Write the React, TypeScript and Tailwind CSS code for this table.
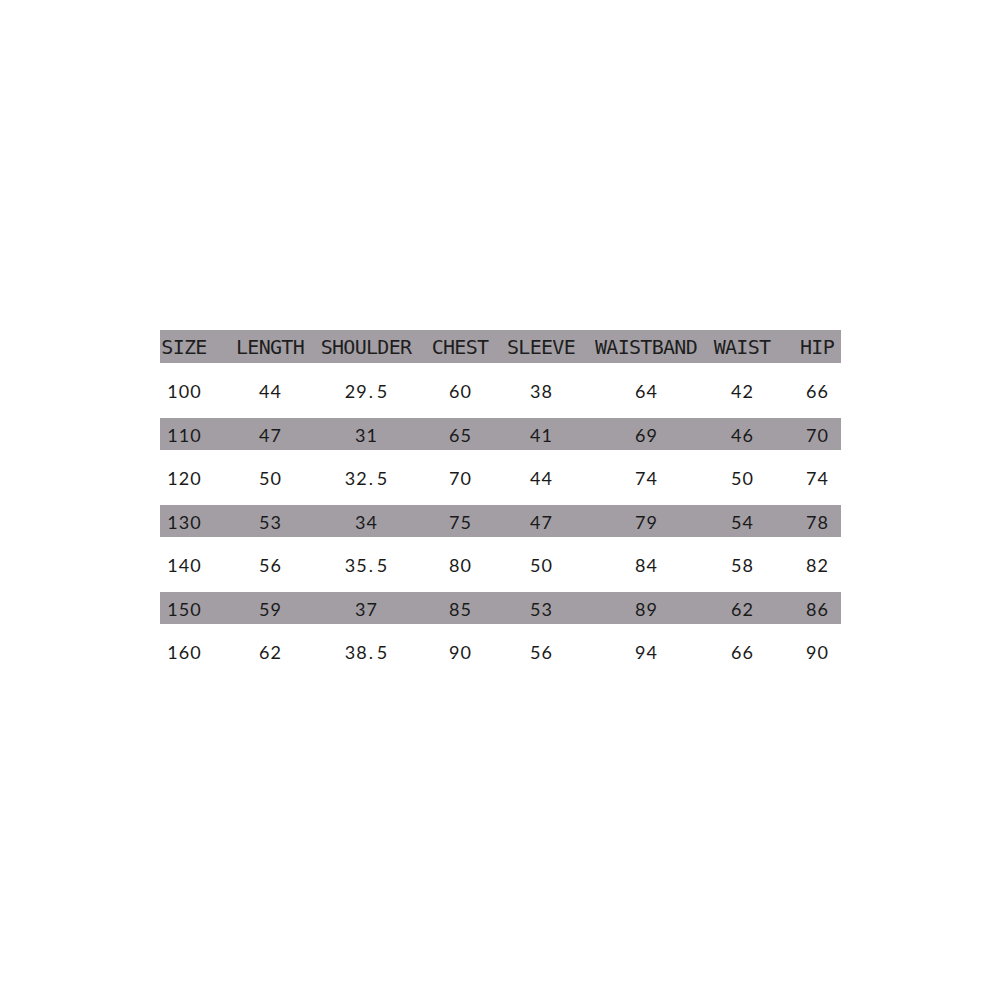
import React from "react";

const header = ["SIZE", "LENGTH", "SHOULDER", "CHEST", "SLEEVE", "WAISTBAND", "WAIST", "HIP"];

const rows: string[][] = [
  ["100", "44", "29.5", "60", "38", "64", "42", "66"],
  ["110", "47", "31", "65", "41", "69", "46", "70"],
  ["120", "50", "32.5", "70", "44", "74", "50", "74"],
  ["130", "53", "34", "75", "47", "79", "54", "78"],
  ["140", "56", "35.5", "80", "50", "84", "58", "82"],
  ["150", "59", "37", "85", "53", "89", "62", "86"],
  ["160", "62", "38.5", "90", "56", "94", "66", "90"],
];

// margin-left per column so that cell (40px wide) centers land on the reference centres
const colMargins = ["ml-[4px]", "ml-[46px]", "ml-[56px]", "ml-[54px]", "ml-[41px]", "ml-[65px]", "ml-[56px]", "ml-[35px]"];

function Value({ v }: { v: string }) {
  const parts = v.split(".");
  if (parts.length === 1) return <span className="tracking-[1px] mr-[-1px]">{v}</span>;
  return (
    <span className="tracking-[1px] mr-[-1px]">
      {parts[0]}
      <span className="inline-block w-[9px] pl-[1px]">.</span>
      {parts[1]}
    </span>
  );
}

function Row({ cells, grey, head, height }: { cells: string[]; grey: boolean; head?: boolean; height: string }) {
  return (
    <div className={`flex items-center ${height} ${grey ? "bg-[#a39ea4]" : "bg-white"}`}>
      {cells.map((c, i) =>
        head ? (
          <div
            key={i}
            className={`${colMargins[i]} w-[40px] shrink-0 flex justify-center whitespace-nowrap text-[#1e1e1e] text-[20px] tracking-[-0.7px]`}
            style={{ fontFamily: '"DejaVu Sans Mono", "Liberation Mono", monospace' }}
          >
            {c}
          </div>
        ) : (
          <div
            key={i}
            className={`${colMargins[i]} w-[40px] shrink-0 flex justify-center whitespace-nowrap text-[#1a1a1a] text-[18px] pt-[2px]`}
            style={{ fontFamily: 'Lato, "Open Sans", sans-serif' }}
          >
            <Value v={c} />
          </div>
        )
      )}
    </div>
  );
}

export default function App() {
  return (
    <div className="w-[1000px] h-[1000px] bg-white pt-[330px] pl-[160px]">
      <div className="w-[681px] flex flex-col">
        <Row cells={header} grey head height="h-[33px]" />
        {rows.map((r, i) => (
          <Row key={i} cells={r} grey={i % 2 === 1} height={i % 2 === 1 ? "h-[32px]" : "h-[55px]"} />
        ))}
      </div>
    </div>
  );
}
